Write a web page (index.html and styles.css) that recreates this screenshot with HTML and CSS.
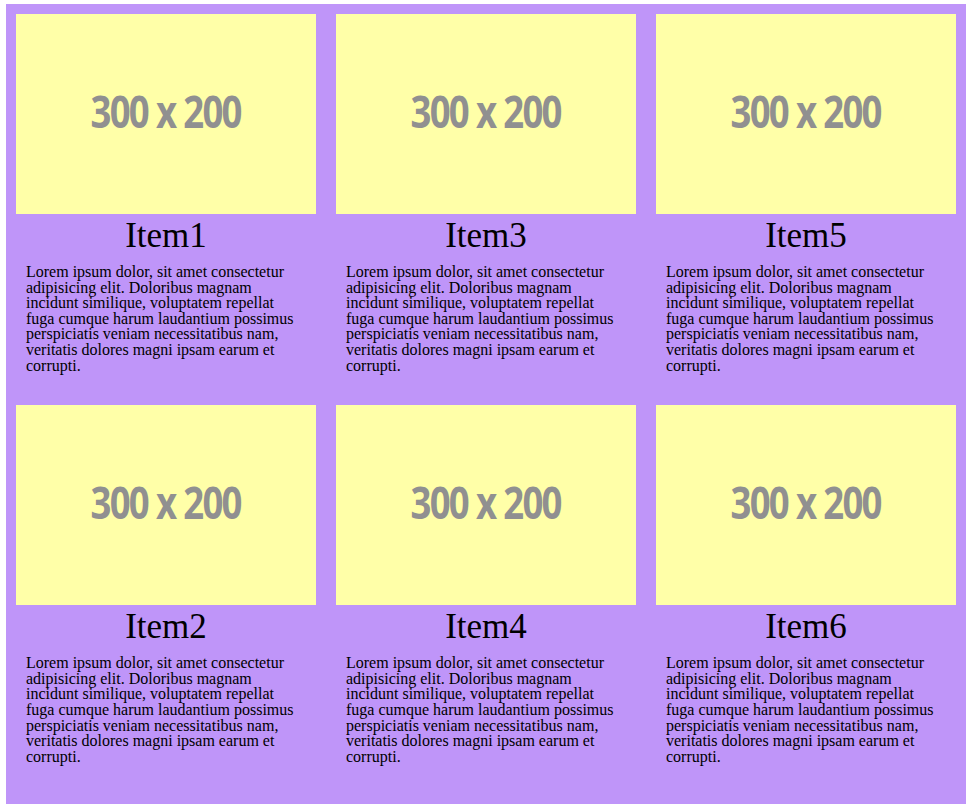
FILE: index.html
```html
<!DOCTYPE html>
<html lang="en">
<head>
<meta charset="utf-8">
<title>Items</title>
<link rel="stylesheet" href="styles.css">
</head>
<body>
<div class="grid">
  <div class="card">
    <div class="thumb"><span>300 x 200</span></div>
    <h2 class="title">Item1</h2>
    <p class="text">Lorem ipsum dolor, sit amet consectetur adipisicing elit. Doloribus magnam incidunt similique, voluptatem repellat fuga cumque harum laudantium possimus perspiciatis veniam necessitatibus nam, veritatis dolores magni ipsam earum et corrupti.</p>
  </div>
  <div class="card">
    <div class="thumb"><span>300 x 200</span></div>
    <h2 class="title">Item2</h2>
    <p class="text">Lorem ipsum dolor, sit amet consectetur adipisicing elit. Doloribus magnam incidunt similique, voluptatem repellat fuga cumque harum laudantium possimus perspiciatis veniam necessitatibus nam, veritatis dolores magni ipsam earum et corrupti.</p>
  </div>
  <div class="card">
    <div class="thumb"><span>300 x 200</span></div>
    <h2 class="title">Item3</h2>
    <p class="text">Lorem ipsum dolor, sit amet consectetur adipisicing elit. Doloribus magnam incidunt similique, voluptatem repellat fuga cumque harum laudantium possimus perspiciatis veniam necessitatibus nam, veritatis dolores magni ipsam earum et corrupti.</p>
  </div>
  <div class="card">
    <div class="thumb"><span>300 x 200</span></div>
    <h2 class="title">Item4</h2>
    <p class="text">Lorem ipsum dolor, sit amet consectetur adipisicing elit. Doloribus magnam incidunt similique, voluptatem repellat fuga cumque harum laudantium possimus perspiciatis veniam necessitatibus nam, veritatis dolores magni ipsam earum et corrupti.</p>
  </div>
  <div class="card">
    <div class="thumb"><span>300 x 200</span></div>
    <h2 class="title">Item5</h2>
    <p class="text">Lorem ipsum dolor, sit amet consectetur adipisicing elit. Doloribus magnam incidunt similique, voluptatem repellat fuga cumque harum laudantium possimus perspiciatis veniam necessitatibus nam, veritatis dolores magni ipsam earum et corrupti.</p>
  </div>
  <div class="card">
    <div class="thumb"><span>300 x 200</span></div>
    <h2 class="title">Item6</h2>
    <p class="text">Lorem ipsum dolor, sit amet consectetur adipisicing elit. Doloribus magnam incidunt similique, voluptatem repellat fuga cumque harum laudantium possimus perspiciatis veniam necessitatibus nam, veritatis dolores magni ipsam earum et corrupti.</p>
  </div>
</div>
</body>
</html>
```
FILE: styles.css
```css
body {
  margin: 4px 6px;
  font-family: "Liberation Serif", "Times New Roman", serif;
  color: #000;
}

.grid {
  box-sizing: border-box;
  width: 960px;
  height: 800px;
  padding: 10px;
  background: #bf95f9;
  display: grid;
  grid-template-columns: repeat(3, 300px);
  grid-template-rows: auto auto;
  grid-auto-flow: column;
  column-gap: 20px;
  row-gap: 22px;
  align-content: start;
}

.card {
  display: flex;
  flex-direction: column;
}

.thumb {
  width: 300px;
  height: 200px;
  background: #ffffa8;
  display: flex;
  align-items: center;
  justify-content: center;
}

.thumb span {
  font-family: "Open Sans", sans-serif;
  font-weight: 700;
  font-size: 44px;
  letter-spacing: -2px;
  color: #909090;
  display: inline-block;
  transform: translateY(-3px) scaleX(0.83);
}

.title {
  margin: 4px 0 0;
  font-size: 35px;
  line-height: 1;
  font-weight: 400;
  text-align: center;
}

.text {
  margin: 0;
  padding: 11px 10px 10px;
  font-size: 16px;
  line-height: 15.6px;
}
```
